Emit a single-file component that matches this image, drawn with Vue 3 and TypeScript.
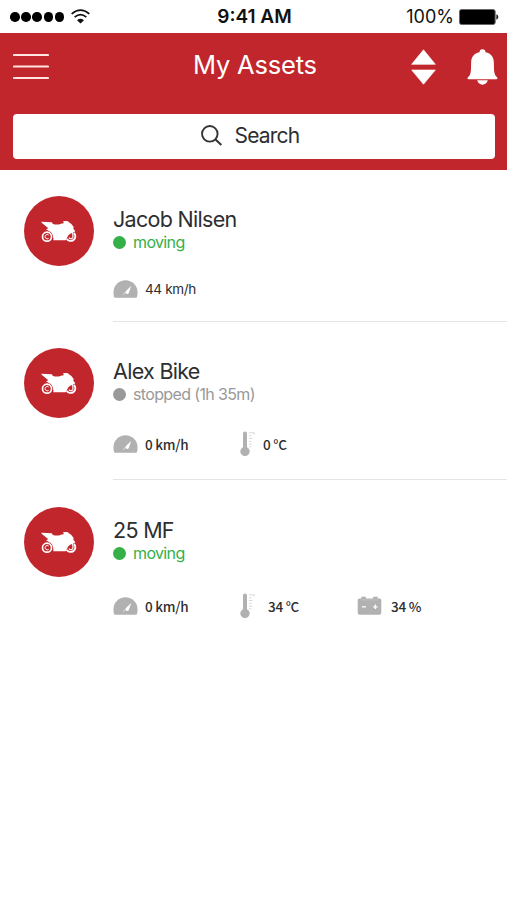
<script setup lang="ts">
type MetricKind = 'speed' | 'temperature' | 'battery'

interface Metric {
  kind: MetricKind
  value: string
}

interface Asset {
  name: string
  state: 'moving' | 'stopped'
  label: string
  lock: 'red' | 'green' | 'grey'
  layout: 'compact' | 'regular' | 'roomy'
  metrics: Metric[]
}

const assets: Asset[] = [
  {
    name: 'Jacob Nilsen',
    state: 'moving',
    label: 'moving',
    lock: 'red',
    layout: 'compact',
    metrics: [{ kind: 'speed', value: '44 km/h' }],
  },
  {
    name: 'Alex Bike',
    state: 'stopped',
    label: 'stopped (1h 35m)',
    lock: 'green',
    layout: 'regular',
    metrics: [
      { kind: 'speed', value: '0 km/h' },
      { kind: 'temperature', value: '0 °C' },
    ],
  },
  {
    name: '25 MF',
    state: 'moving',
    label: 'moving',
    lock: 'grey',
    layout: 'roomy',
    metrics: [
      { kind: 'speed', value: '0 km/h' },
      { kind: 'temperature', value: '34 °C' },
      { kind: 'battery', value: '34 %' },
    ],
  },
]
</script>

<template>
  <div class="screen">
    <div class="status-bar">
      <div class="carrier">
        <span v-for="n in 5" :key="n" class="signal-dot"></span>
        <svg class="wifi" viewBox="0 0 57 44">
          <path d="M2 14Q28.500-8 55 14M11 24Q28.500 9 46 24" fill="none" stroke="#111" stroke-width="5.500" />
          <path d="M18 33Q28.500 25 39 33L28.500 43Z" fill="#111" />
        </svg>
      </div>
      <span class="time">9:41 AM</span>
      <div class="power">
        <span>100%</span>
        <svg class="power-icon" viewBox="0 0 120 48">
          <rect x="1.500" y="1.500" width="107" height="45" rx="6" fill="#000" stroke="#666" stroke-width="3" />
          <path d="M112 16Q118 18 118 24T112 32Z" fill="#222" />
        </svg>
      </div>
    </div>

    <header class="header">
      <div class="title-row">
        <svg class="menu" viewBox="0 0 36 28">
          <path d="M1 2H35M1 13.500H35M1 25H35" stroke="#ffe4e2" stroke-width="2.200" stroke-linecap="round" />
        </svg>
        <h1>My Assets</h1>
        <svg class="sort" viewBox="0 0 74 106">
          <path d="M37 2L72 45H2ZM2 62H72L37 104Z" fill="#fff" stroke="#fff" stroke-width="2" stroke-linejoin="round" />
        </svg>
        <svg class="bell" viewBox="0 0 92 108">
          <path d="M46 1C40 1 37 5 37 10C20 13 13 25 12 39C11 55 13 68 8 78C6 82 1 84 1 88Q1 91 5 91H87Q91 91 91 88C91 84 86 82 84 78C79 68 81 55 80 39C79 25 72 13 55 10C55 5 52 1 46 1ZM30 94H62C59 103 54 107 46 107S33 103 30 94Z" fill="#fff" />
        </svg>
      </div>
      <div class="search">
        <svg class="search-icon" viewBox="0 0 62 62">
          <circle cx="26" cy="26" r="23" fill="none" stroke="#333" stroke-width="5.500" />
          <path d="M43 43L60 59" stroke="#333" stroke-width="6" />
        </svg>
        <span>Search</span>
      </div>
    </header>

    <main>
      <article v-for="asset in assets" :key="asset.name" class="asset" :class="asset.layout">
        <div class="avatar">
          <svg class="bike" viewBox="0 0 108 66">
            <path d="M1 2L32 4L36 9Q49 13 60 8L70 6L66 3L68 0H79L91 9L98 18L97 23L103 31L95 36Q82 38 79 49L74 58H37Q38 41 29 33L15 25L22 22L2 5Z" fill="#fff" />
            <circle cx="18" cy="47" r="13.500" fill="none" stroke="#fff" stroke-width="5" />
            <path d="M23 42A6.500 6.500 0 1 0 23 52" fill="none" stroke="#fff" stroke-width="3" />
            <path d="M77 53A14 14 0 1 0 99 36" fill="none" stroke="#fff" stroke-width="5.500" />
            <path d="M84 50A6.500 6.500 0 0 0 96 46L95 36" fill="none" stroke="#fff" stroke-width="3.500" />
          </svg>
        </div>

        <div class="details">
          <h2>{{ asset.name }}</h2>
          <div class="state" :class="asset.state">
            <span class="state-dot"></span>
            <span class="state-label">{{ asset.label }}</span>
          </div>
          <div class="metrics">
            <div v-for="metric in asset.metrics" :key="metric.kind" class="metric" :class="metric.kind">
              <svg v-if="metric.kind === 'speed'" class="metric-icon" viewBox="0 0 74 54">
                <path d="M4 53Q1 50 1 37A36 36 0 0 1 73 37Q73 50 70 53Z" fill="#b1b1b1" />
                <path d="M54 18L47 39Q43 45 38 40Q35 36 41 31Z" fill="#fff" />
                <path d="M50 24L30 44" stroke="#fff" stroke-width="2" />
              </svg>
              <svg v-else-if="metric.kind === 'temperature'" class="metric-icon" viewBox="0 0 48 74">
                <path d="M9 48V7Q9 1 15 1T21 7V48A14 14 0 1 1 9 48Z" fill="#b1b1b1" />
                <path d="M27 5H43M27 14H34M27 22H37M27 31H34M27 39H37M27 47H34M42 5V10" fill="none" stroke="#c4c4c4" stroke-width="2" />
              </svg>
              <svg v-else class="metric-icon" viewBox="0 0 74 58">
                <path d="M12 2H26V8H48V2H62V8H68Q73 8 73 13V52Q73 57 68 57H6Q1 57 1 52V13Q1 8 6 8H12Z" fill="#b1b1b1" />
                <path d="M10 12H64" stroke="#c8c8c8" stroke-width="2" />
                <path d="M14 33H26M48 33H62M55 26V40" stroke="#fff" stroke-width="4" />
              </svg>
              <span class="metric-value">{{ metric.value }}</span>
            </div>
          </div>
        </div>

        <div class="indicators">
          <svg class="indicator" viewBox="0 0 78 78">
            <path d="M3 8H31L18 21ZM17 9V70" fill="none" stroke="#d43d59" stroke-width="4.500" stroke-linejoin="round" />
            <path d="M31 71V53M44 71V43M58 71V32M72 71V20" stroke="#d5526a" stroke-width="4.500" />
          </svg>
          <svg class="indicator" viewBox="0 0 78 78">
            <g fill="#32ad46" transform="translate(37 39) rotate(-45)">
              <rect x="-12" y="-17" width="24" height="34" rx="2" />
              <rect x="-43" y="-9" width="25" height="19" rx="2" />
              <rect x="18" y="-9" width="25" height="19" rx="2" />
              <path d="M-20 0H20" stroke="#32ad46" stroke-width="6" />
              <path d="M-10 31Q-9 20 0 20T10 31Z" />
              <path d="M0 28V36" stroke="#32ad46" stroke-width="5" />
              <path d="M-39 0H-21M-30-7V8M21 0H39M30-7V8" stroke="#d7f5dc" stroke-width="2.500" />
            </g>
          </svg>
          <svg class="indicator" :class="`lock-${asset.lock}`" viewBox="0 0 78 78">
            <path d="M20 37V24Q20 5 37 5T54 24V37" fill="none" stroke="currentColor" stroke-width="7" />
            <rect x="11" y="33" width="52" height="41" rx="4" fill="currentColor" />
            <path d="M37 42A6 6 0 0 0 33 52V53H35V64H40V53L43 51A6 6 0 0 0 37 42Z" fill="#fff" />
          </svg>
          <svg class="indicator" viewBox="0 0 78 78">
            <circle cx="37" cy="39" r="33" fill="none" stroke="#b3b3b3" stroke-width="6" />
            <circle cx="37" cy="39" r="9.500" fill="#b0b0b0" />
          </svg>
        </div>
      </article>
    </main>
  </div>
</template>

<style>
body {
  margin: 0;
  background: #fff;
}
</style>

<style scoped>
.screen {
  width: 507px;
  height: 900px;
  overflow: hidden;
  background: #fff;
  color: #2d2e30;
  font-family: Inter, "Liberation Sans", sans-serif;
}

svg {
  display: block;
  flex: none;
}

.status-bar {
  display: grid;
  grid-template-columns: 1fr auto 1fr;
  align-items: center;
  box-sizing: border-box;
  height: 32.500px;
  padding: 1px 8px 0 10px;
  color: #111;
  font-size: 18px;
  line-height: 22px;
}

.carrier {
  display: flex;
  align-items: center;
  gap: 1.5px;
}

.signal-dot {
  width: 9.700px;
  height: 9.700px;
  border-radius: 50%;
  background: #000;
}

.wifi {
  width: 19px;
  height: 15px;
  margin-left: 5px;
}

.time {
  font-size: 19px;
  font-weight: 600;
}

.power {
  display: flex;
  align-items: center;
  justify-content: flex-end;
  gap: 5px;
}

.power-icon {
  width: 40px;
  height: 16px;
}

.header {
  box-sizing: border-box;
  height: 137.500px;
  padding: 0 12px 0 12.500px;
  background: #c2262d;
}

.title-row {
  display: grid;
  grid-template-columns: 36px 1fr 26px 31px;
  align-items: center;
  height: 69px;
  margin-right: -2.500px;
}

.menu {
  width: 36px;
  height: 28px;
}

h1 {
  margin: 0 0 4px 144.500px;
  color: #fff;
  font-size: 25.500px;
  font-weight: 400;
  letter-spacing: -0.2px;
  line-height: 32px;
  white-space: nowrap;
}

.sort {
  width: 25px;
  height: 36px;
  margin-left: -29.500px;
}

.bell {
  width: 31px;
  height: 36px;
}

.search {
  display: flex;
  align-items: center;
  box-sizing: border-box;
  gap: 12.500px;
  height: 45px;
  margin-top: 12px;
  padding: 0 0 1px 188.500px;
  border-radius: 4px;
  background: #fff;
  font-size: 21px;
  letter-spacing: -0.8px;
}

.search-icon {
  width: 21px;
  height: 21px;
}

.asset {
  display: grid;
  grid-template-columns: 89px 1fr 65px;
  box-sizing: border-box;
  padding: 26px 22px 0 24px;
}

.compact {
  height: 152px;
  --metrics-offset: 24px;
}

.regular {
  height: 158px;
  --metrics-offset: 27px;
}

.roomy {
  height: 162px;
  padding-top: 27px;
  --metrics-offset: 30px;
}

.avatar {
  display: grid;
  place-items: center;
  width: 70px;
  height: 70px;
  border-radius: 50%;
  background: #c2262d;
}

.bike {
  width: 36px;
  height: 22px;
  margin-top: 1px;
}

.details {
  display: flex;
  flex-direction: column;
  box-sizing: border-box;
  width: 394px;
  padding-top: 10px;
  border-bottom: 1px solid #e4e4e4;
}

.roomy .details {
  border-bottom: 0;
}

h2 {
  margin: 0;
  font-size: 21.500px;
  font-weight: 400;
  letter-spacing: -0.7px;
  line-height: 26px;
  white-space: nowrap;
}

.state {
  display: flex;
  align-items: center;
  gap: 7px;
  height: 21px;
  font-size: 16px;
  letter-spacing: -0.64px;
}

.state-dot {
  width: 13px;
  height: 13px;
  border-radius: 50%;
  background: currentColor;
}

.state-label {
  margin-top: -2px;
}

.moving {
  color: #35af48;
}

.stopped {
  color: #999;
}

.metrics {
  display: grid;
  grid-template-columns: 127px 117px 100px;
  height: 26px;
  margin-top: calc(var(--metrics-offset) - 2px);
}

.metric {
  display: flex;
  align-items: center;
  font-family: "Noto Sans CJK SC", "Noto Sans", sans-serif;
  font-size: 13.500px;
  font-weight: 500;
  letter-spacing: -0.25px;
  line-height: 20px;
}

.compact .metric {
  font-family: Inter, sans-serif;
  font-size: 13.500px;
  font-weight: 400;
  letter-spacing: -0.35px;
}

.metrics .metric {
  padding-top: 1px;
}

.metric-value {
  white-space: nowrap;
}

.speed .metric-icon {
  width: 25px;
  height: 18px;
  margin-right: 7px;
}

.temperature .metric-icon {
  width: 16px;
  height: 25px;
  margin-right: 7px;
}

.roomy .temperature .metric-icon {
  margin-right: 12px;
}

.battery .metric-icon {
  width: 25px;
  height: 19px;
  margin-right: 9px;
}

.indicators {
  display: grid;
  grid-template-columns: 26px 26px;
  grid-template-rows: 26px 26px;
  gap: 13px 14px;
  align-self: start;
  margin-top: 2px;
}

.indicator {
  width: 26px;
  height: 26px;
}

.lock-red {
  color: #dc3653;
}

.lock-green {
  color: #32ad46;
}

.lock-grey {
  color: #b3b3b3;
}
</style>
